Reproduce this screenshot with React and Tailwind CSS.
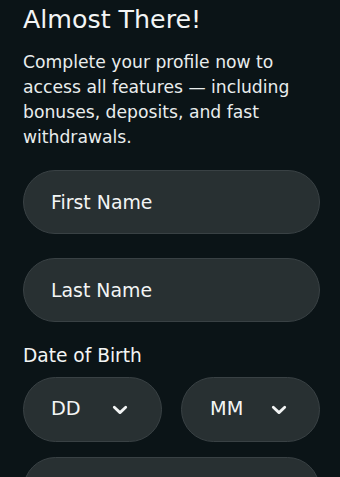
function Chevron() {
  return (
    <svg width="16" height="10" viewBox="0 0 16 10" fill="none" className="shrink-0">
      <path d="M2.3 2.3 L8 7.6 L13.7 2.3" stroke="#f2f4f4" strokeWidth="2.8" strokeLinecap="round" strokeLinejoin="round" />
    </svg>
  );
}

export default function App() {
  return (
    <div
      className="h-[477px] w-full bg-[#0b1417] text-[#f3f5f5] pl-[23px] pr-[20px] pt-[4px] overflow-hidden"
      style={{ fontFamily: "'DejaVu Sans', sans-serif" }}
    >
      <h1 className="text-[25.3px] leading-[32px] font-normal">Almost There!</h1>
      <p className="mt-[14px] text-[17.2px] leading-[25px] text-[#e9eded]">
        Complete your profile now to access all features — including bonuses, deposits, and fast withdrawals.
      </p>

      <div className="mt-[20px] flex flex-col gap-[24px]">
        <div className="h-[64px] rounded-full bg-[#283032] border border-[#394144] flex items-center pl-[27px] text-[18.9px]">
          First Name
        </div>
        <div className="h-[64px] rounded-full bg-[#283032] border border-[#394144] flex items-center pl-[27px] text-[18.9px]">
          Last Name
        </div>
      </div>

      <div className="mt-[22px] text-[18.6px] leading-[24px]">Date of Birth</div>

      <div className="mt-[9px] grid grid-cols-2 gap-[19px]">
        <div className="h-[65px] rounded-full bg-[#283032] border border-[#394144] flex items-center justify-between pl-[27px] pr-[33px] text-[19.3px]">
          <span>DD</span>
          <Chevron />
        </div>
        <div className="h-[65px] rounded-full bg-[#283032] border border-[#394144] flex items-center justify-between pl-[28px] pr-[32px] text-[19.3px]">
          <span>MM</span>
          <Chevron />
        </div>
      </div>

      <div className="mt-[15px] h-[65px] rounded-full bg-[#283032] border border-[#394144]"></div>
    </div>
  );
}
